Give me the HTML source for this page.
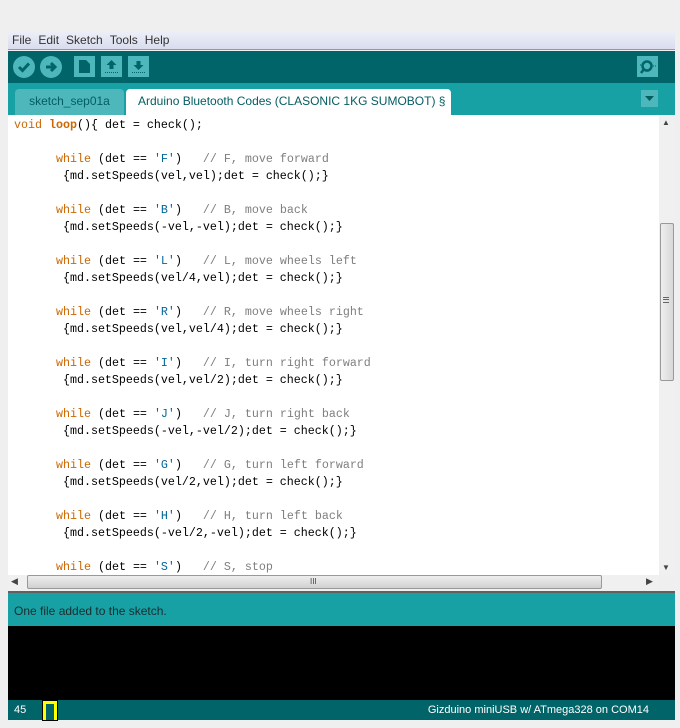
<!DOCTYPE html>
<html><head><meta charset="utf-8"><style>
*{margin:0;padding:0;box-sizing:border-box}
body{width:680px;height:728px;background:#efefef;position:relative;overflow:hidden;font-family:"Liberation Sans",sans-serif}
.a{position:absolute}
.menu{left:8px;top:31px;width:667px;height:19px;background:linear-gradient(#eef0f8,#d8dcee);border-bottom:1px solid #999;font-size:12px;color:#333;line-height:18px}
.menu span{margin-left:4px;margin-right:3px}
.tb{left:8px;top:51px;width:667px;height:32px;background:#006468}
.btn{background:#4db7bb}
.tabs{left:8px;top:83px;width:667px;height:32px;background:#17a1a5}
.ed{left:8px;top:115px;width:651px;height:460px;background:#fff;overflow:hidden}
pre{position:absolute;left:6px;top:2px;font-family:"Liberation Mono",monospace;font-size:11.67px;line-height:17px;color:#000}
.k{color:#cc6600}.b{color:#cc6600;font-weight:bold}.s{color:#006699}.c{color:#7e7e7e}
</style></head><body>
<div class="a menu"><span>File</span><span>Edit</span><span>Sketch</span><span>Tools</span><span>Help</span></div>
<div class="a tb"></div>
<svg class="a" style="left:12px;top:55px" width="140" height="26">
<circle cx="12" cy="12" r="11" fill="#4db7bb"/><path d="M7 12l3.5 3.5L17 8.5" stroke="#006468" stroke-width="3" fill="none"/>
<circle cx="39" cy="12" r="11" fill="#4db7bb"/><path d="M34 12h8M39 8l4 4-4 4" stroke="#006468" stroke-width="3" fill="none"/>
<rect x="62" y="1" width="21" height="21" fill="#4db7bb"/><path d="M67 5h7l4 4v9h-11z" fill="#006468"/>
<rect x="89" y="1" width="21" height="21" fill="#4db7bb"/><path d="M99.5 5l-5 5h3v4h4v-4h3z" fill="#006468"/><path d="M93 17.5h13" stroke="#006468" stroke-dasharray="1 1"/>
<rect x="116" y="1" width="21" height="21" fill="#4db7bb"/><path d="M126.5 15l-5-5h3V6h4v4h3z" fill="#006468"/><path d="M120 17.5h13" stroke="#006468" stroke-dasharray="1 1"/>
</svg>
<svg class="a" style="left:637px;top:56px" width="22" height="22"><rect width="21" height="21" fill="#4db7bb"/><circle cx="10" cy="10" r="4.5" stroke="#006468" stroke-width="2.5" fill="none"/><path d="M7 13l-3 4" stroke="#006468" stroke-width="2.5"/><path d="M3 9h1M16 10h3" stroke="#006468" stroke-dasharray="1 1"/></svg>
<div class="a tabs"></div>
<div class="a" style="left:15px;top:89px;width:109px;height:26px;background:#4db7bb;border-radius:4px 4px 0 0;color:#045d61;font-size:12px;line-height:25px;text-align:center">sketch_sep01a</div>
<div class="a" style="left:126px;top:89px;width:325px;height:26px;background:#fff;border-radius:4px 4px 0 0;color:#045d61;font-size:12px;line-height:25px;padding-left:12px;white-space:nowrap">Arduino Bluetooth Codes (CLASONIC 1KG SUMOBOT) §</div>
<svg class="a" style="left:641px;top:90px" width="18" height="18"><rect width="17" height="17" fill="#4db7bb"/><path d="M4 6h9l-4.5 5z" fill="#045d61"/></svg>
<div class="a ed"><pre><span class="k">void</span> <span class="b">loop</span>(){ det = check();

      <span class="k">while</span> (det == <span class="s">'F'</span>)   <span class="c">// F, move forward</span>
       {md.setSpeeds(vel,vel);det = check();}

      <span class="k">while</span> (det == <span class="s">'B'</span>)   <span class="c">// B, move back</span>
       {md.setSpeeds(-vel,-vel);det = check();}

      <span class="k">while</span> (det == <span class="s">'L'</span>)   <span class="c">// L, move wheels left</span>
       {md.setSpeeds(vel/4,vel);det = check();}

      <span class="k">while</span> (det == <span class="s">'R'</span>)   <span class="c">// R, move wheels right</span>
       {md.setSpeeds(vel,vel/4);det = check();}

      <span class="k">while</span> (det == <span class="s">'I'</span>)   <span class="c">// I, turn right forward</span>
       {md.setSpeeds(vel,vel/2);det = check();}

      <span class="k">while</span> (det == <span class="s">'J'</span>)   <span class="c">// J, turn right back</span>
       {md.setSpeeds(-vel,-vel/2);det = check();}

      <span class="k">while</span> (det == <span class="s">'G'</span>)   <span class="c">// G, turn left forward</span>
       {md.setSpeeds(vel/2,vel);det = check();}

      <span class="k">while</span> (det == <span class="s">'H'</span>)   <span class="c">// H, turn left back</span>
       {md.setSpeeds(-vel/2,-vel);det = check();}

      <span class="k">while</span> (det == <span class="s">'S'</span>)   <span class="c">// S, stop</span></pre></div>
<div class="a" style="left:659px;top:115px;width:16px;height:460px;background:#f0f0f0"></div>
<div class="a" style="left:660px;top:223px;width:14px;height:158px;background:linear-gradient(90deg,#eee,#d8d8d8);border:1px solid #999;border-radius:2px"></div>
<div class="a" style="left:663px;top:297px;width:6px;height:6px;border-top:1px solid #666;border-bottom:1px solid #666"></div>
<div class="a" style="left:663px;top:299px;width:6px;height:1px;background:#666"></div>
<div class="a" style="left:662px;top:118px;font-size:8px;color:#444">▲</div>
<div class="a" style="left:662px;top:563px;font-size:8px;color:#444">▼</div>
<div class="a" style="left:8px;top:575px;width:651px;height:16px;background:#f0f0f0"></div>
<div class="a" style="left:27px;top:575px;width:575px;height:14px;background:linear-gradient(#eee,#d0d0d0);border:1px solid #999;border-radius:2px"></div>
<div class="a" style="left:310px;top:577px;font-size:8px;color:#444">III</div>
<div class="a" style="left:11px;top:576px;font-size:9px;color:#444">◀</div>
<div class="a" style="left:646px;top:576px;font-size:9px;color:#444">▶</div>
<div class="a" style="left:8px;top:591px;width:667px;height:2px;background:#606060"></div>
<div class="a" style="left:8px;top:593px;width:667px;height:33px;background:#17a1a5;font-size:12px;color:#1a2c2c;padding:11px 0 0 6px">One file added to the sketch.</div>
<div class="a" style="left:8px;top:626px;width:667px;height:74px;background:#000"></div>
<div class="a" style="left:8px;top:700px;width:667px;height:20px;background:#006468;color:#fff;font-size:11px;line-height:20px"><span style="margin-left:6px">45</span><span style="position:absolute;right:26px">Gizduino miniUSB w/ ATmega328 on COM14</span></div>
<div class="a" style="left:43px;top:701px;width:14px;height:19px;border:3px solid #ffff00;border-bottom:none;outline:1px solid #000;background:#006468"></div>
</body></html>
